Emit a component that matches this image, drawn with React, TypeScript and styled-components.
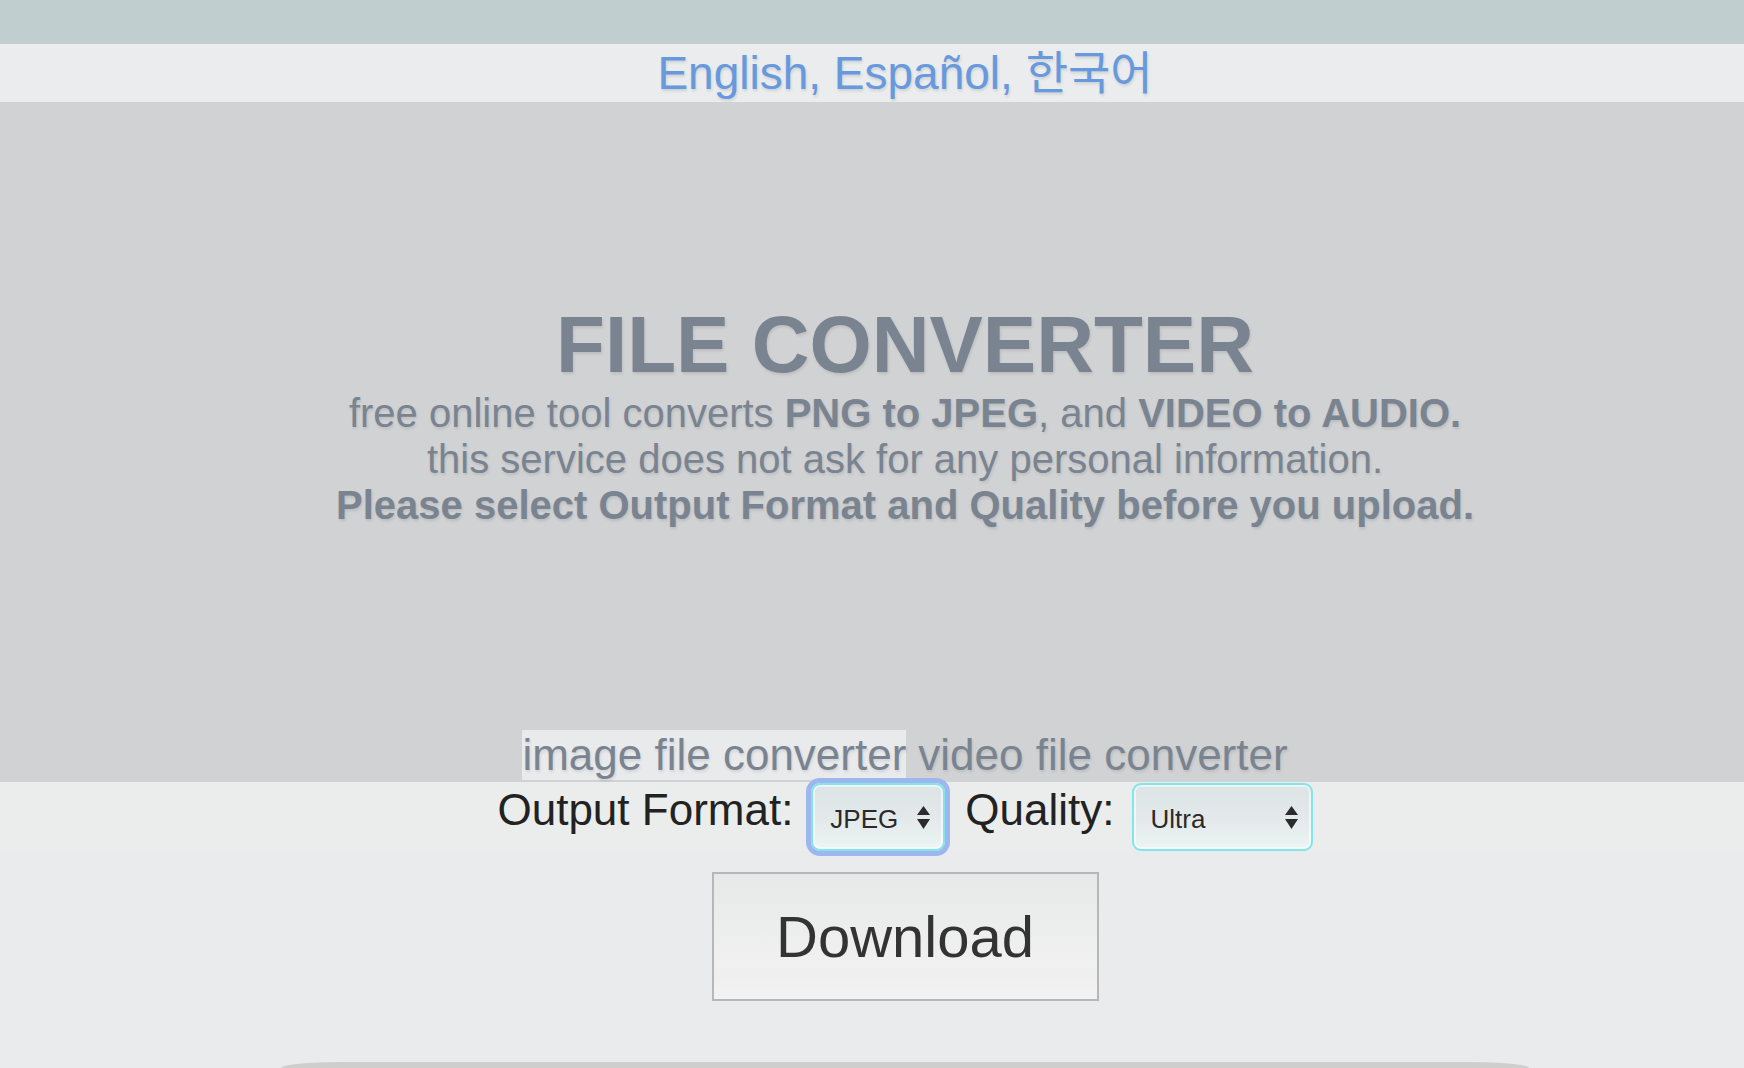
import React from "react";
import styled, { createGlobalStyle } from "styled-components";

const GlobalStyle = createGlobalStyle`
  html, body {
    margin: 0;
    padding: 0;
    background: #eaebed;
    font-family: "Liberation Sans", Arial, sans-serif;
    overflow: hidden;
  }
`;

const Page = styled.div`
  display: flex;
  flex-direction: column;
  height: 1068px;
  background: #eaebed;
`;

const TopBar = styled.div`
  height: 44px;
  background: #c0ced0;
`;

const LangBar = styled.nav`
  height: 58px;
  background: #ebeced;
  display: flex;
  justify-content: center;
  padding-left: 66px;
  font-size: 46px;
  line-height: 58px;
  color: #6699dd;
  text-shadow: 1px 2px 3px rgba(0, 0, 0, 0.12);
  font-family: "Liberation Sans", "Noto Sans CJK KR", sans-serif;
`;

const LangLink = styled.a`
  color: inherit;
  text-decoration: none;
`;

const Hero = styled.header`
  height: 680px;
  box-sizing: border-box;
  background: #d1d2d4;
  display: flex;
  flex-direction: column;
  align-items: center;
  padding: 203px 0 2px 66px;
  color: #7a8491;
  text-shadow: 1px 2px 3px rgba(0, 0, 0, 0.1);
`;

const Title = styled.h1`
  margin: 0;
  font-size: 80px;
  line-height: 80px;
  font-weight: 700;
`;

const Sub = styled.p`
  margin: 5px 0 0;
  font-size: 40px;
  line-height: 46px;
  text-align: center;
`;

const Tabs = styled.div`
  margin-top: auto;
  display: flex;
  gap: 12px;
  font-size: 44px;
  line-height: 50px;
`;

const Tab = styled.span<{ $active?: boolean }>`
  display: block;
  height: 50px;
  background: ${(p) => (p.$active ? "#e9eaec" : "transparent")};
  cursor: pointer;
`;

const ControlRow = styled.div`
  display: flex;
  justify-content: center;
  align-items: flex-start;
  padding: 1px 0 0 66px;
  height: 68px;
  background: #eaedeb;
`;

const Label = styled.span<{ $gapRight: number }>`
  font-size: 44px;
  line-height: 50px;
  margin-top: 2px;
  color: #222;
  margin-right: ${(p) => p.$gapRight}px;
`;

const SelectBox = styled.div<{ $width: number; $focused?: boolean; $gapRight?: number }>`
  box-sizing: border-box;
  width: ${(p) => p.$width}px;
  height: 68px;
  display: flex;
  align-items: center;
  justify-content: space-between;
  padding: 0 13px 0 17px;
  border: 2px solid #80e6ea;
  border-radius: 9px;
  background: linear-gradient(#dde4e5 0%, #e3e9ea 50%, #edf4f4 100%);
  box-shadow: inset 0 0 0 2px rgba(255, 255, 255, 0.55)
    ${(p) => (p.$focused ? ", 0 0 0 5px #9db7ee" : "")};
  margin-right: ${(p) => p.$gapRight ?? 0}px;
  font-size: 26px;
  color: #2a2a2a;
`;

const SelectText = styled.span`
  padding-top: 4px;
`;

const Arrows = () => (
  <svg width="13" height="23" viewBox="0 0 13 23">
    <polygon points="6.5,0 13,9 0,9" fill="#2b2b2b" />
    <polygon points="0,13 13,13 6.5,23" fill="#2b2b2b" />
  </svg>
);

const DownloadWrap = styled.div`
  display: flex;
  justify-content: center;
  padding-left: 66px;
  margin-top: 21px;
`;

const DownloadButton = styled.button`
  box-sizing: border-box;
  width: 387px;
  height: 129px;
  border: 2px solid #b7b7b7;
  border-radius: 0;
  background: linear-gradient(
    #e7e8e8 0%,
    #f1f1f1 75%,
    #eeeeee 76%,
    #f3f3f3 100%
  );
  font-family: "Liberation Sans", Arial, sans-serif;
  font-size: 58px;
  color: #333;
  padding: 0;
  cursor: pointer;
`;

const FooterWrap = styled.div`
  display: flex;
  justify-content: center;
  padding-left: 66px;
  margin-top: 61px;
`;

const FooterCard = styled.div`
  width: 1248px;
  height: 6px;
  background: #d0cecd;
  border-radius: 60px 60px 0 0 / 6px 6px 0 0;
`;

export default function App() {
  return (
    <>
      <GlobalStyle />
      <Page>
        <TopBar />
        <LangBar>
          <LangLink href="#">English</LangLink>,&nbsp;
          <LangLink href="#">Español</LangLink>,&nbsp;
          <LangLink href="#">한국어</LangLink>
        </LangBar>
        <Hero>
          <Title>FILE CONVERTER</Title>
          <Sub>
            free online tool converts <b>PNG to JPEG</b>, and <b>VIDEO to AUDIO.</b>
            <br />
            this service does not ask for any personal information.
            <br />
            <b>Please select Output Format and Quality before you upload.</b>
          </Sub>
          <Tabs>
            <Tab $active>image file converter</Tab>
            <Tab>video file converter</Tab>
          </Tabs>
        </Hero>
        <ControlRow>
          <Label $gapRight={18}>Output Format:</Label>
          <SelectBox $width={134} $focused $gapRight={20}>
            <SelectText>JPEG</SelectText>
            <Arrows />
          </SelectBox>
          <Label $gapRight={17}>Quality:</Label>
          <SelectBox $width={181}>
            <SelectText>Ultra</SelectText>
            <Arrows />
          </SelectBox>
        </ControlRow>
        <DownloadWrap>
          <DownloadButton>Download</DownloadButton>
        </DownloadWrap>
        <FooterWrap>
          <FooterCard />
        </FooterWrap>
      </Page>
    </>
  );
}
